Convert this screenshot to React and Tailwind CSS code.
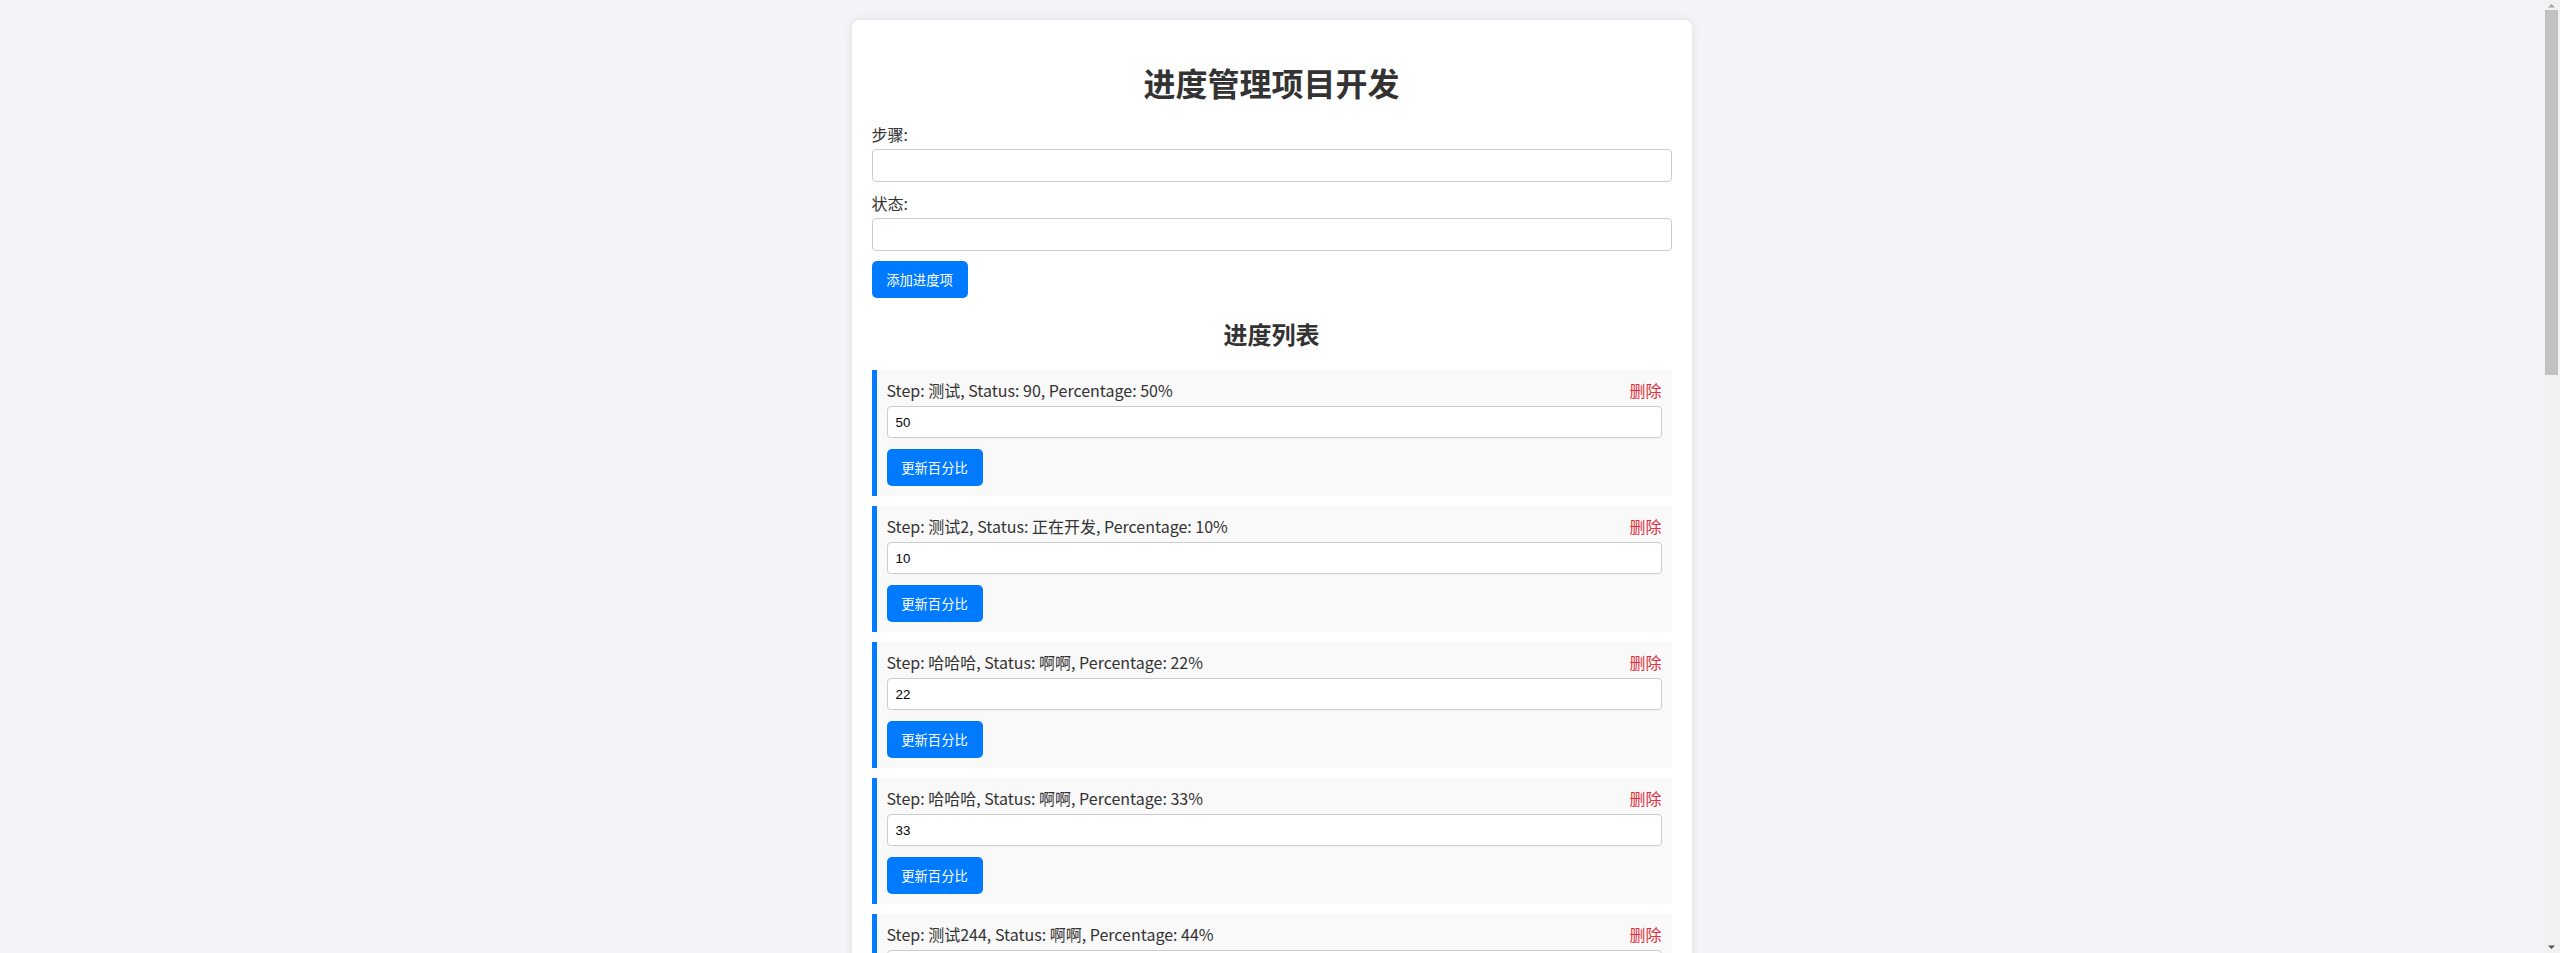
import React, { useState } from 'react';

const initialItems = [
  { step: '测试', status: '90', percentage: 50 },
  { step: '测试2', status: '正在开发', percentage: 10 },
  { step: '哈哈哈', status: '啊啊', percentage: 22 },
  { step: '哈哈哈', status: '啊啊', percentage: 33 },
  { step: '测试244', status: '啊啊', percentage: 44 },
  { step: '测试3', status: '完成', percentage: 60 },
  { step: '设计', status: '进行中', percentage: 70 },
  { step: '编码', status: '进行中', percentage: 35 },
  { step: '联调', status: '未开始', percentage: 0 },
  { step: '验收', status: '未开始', percentage: 5 },
  { step: '部署', status: '未开始', percentage: 0 },
  { step: '文档', status: '啊啊', percentage: 15 },
  { step: '回归', status: '啊啊', percentage: 20 },
  { step: '上线', status: '未开始', percentage: 0 },
  { step: '复盘', status: '未开始', percentage: 0 },
];

function Scrollbar() {
  return (
    <div className="flex w-[17px] shrink-0 flex-col items-center bg-[#f1f1f1]">
      <svg width="9" height="9" viewBox="0 0 9 9" className="mt-[1px]">
        <path d="M1 6.5 L4.5 3 L8 6.5 Z" fill="#a3a3a3" />
      </svg>
      <div className="w-[13px] h-[365px] bg-[#c1c1c1]" />
      <div className="flex-1" />
      <svg width="9" height="9" viewBox="0 0 9 9" className="mb-[1px]">
        <path d="M1 2.5 L8 2.5 L4.5 6 Z" fill="#505050" />
      </svg>
    </div>
  );
}

export default function App() {
  const [items, setItems] = useState(initialItems.map((it) => ({ ...it, draft: String(it.percentage) })));
  const [step, setStep] = useState('');
  const [status, setStatus] = useState('');

  const addItem = () => {
    if (!step) return;
    setItems([...items, { step, status, percentage: 0, draft: '0' }]);
    setStep('');
    setStatus('');
  };

  const updateDraft = (i, value) => {
    const next = [...items];
    next[i] = { ...next[i], draft: value };
    setItems(next);
  };

  const applyPercentage = (i) => {
    const next = [...items];
    next[i] = { ...next[i], percentage: Number(next[i].draft) || 0 };
    setItems(next);
  };

  const removeItem = (i) => setItems(items.filter((_, idx) => idx !== i));

  return (
    <div className="flex h-screen bg-[#f4f4f8] font-['Noto_Sans_CJK_SC','Noto_Sans',sans-serif] text-[#333]">
      <div className="flex-1 overflow-y-auto">
        <div className="mx-auto mt-5 w-[840px] rounded-lg bg-white p-5 shadow-[0_0_10px_rgba(0,0,0,0.1)]">
          {/* Title */}
          <h1 className="my-[21px] text-center text-[32px] font-bold leading-[42px]">进度管理项目开发</h1>

          {/* Add form */}
          <label className="mb-[4px] block text-base leading-[21px]">步骤:</label>
          <input
            value={step}
            onChange={(e) => setStep(e.target.value)}
            className="mb-[11px] block h-[33px] w-full rounded border border-[#ccc] bg-white px-2 font-['Liberation_Sans',sans-serif] text-[13.33px] outline-none"
          />
          <label className="mb-[4px] block text-base leading-[21px]">状态:</label>
          <input
            value={status}
            onChange={(e) => setStatus(e.target.value)}
            className="mb-[10px] block h-[33px] w-full rounded border border-[#ccc] bg-white px-2 font-['Liberation_Sans',sans-serif] text-[13.33px] outline-none"
          />
          <button
            onClick={addItem}
            className="block h-[37px] w-[96px] rounded-[5px] bg-[#007bff] text-[13.33px] text-white"
          >
            添加进度项
          </button>

          {/* List */}
          <h2 className="my-5 text-center text-2xl font-bold leading-[32px]">进度列表</h2>

          <ul className="flex flex-col gap-[10px]">
            {items.map((item, i) => (
              <li key={i} className="border-l-[5px] border-[#007bff] bg-[#f9f9f9] p-[10px]">
                <div className="flex items-start justify-between text-base leading-[21px]">
                  <span>
                    Step: {item.step}, Status: {item.status}, Percentage: {item.percentage}%
                  </span>
                  <button onClick={() => removeItem(i)} className="text-base leading-[21px] text-[#e0303f]">
                    删除
                  </button>
                </div>
                <input
                  value={item.draft}
                  onChange={(e) => updateDraft(i, e.target.value)}
                  className="mt-[5px] block h-[32px] w-full rounded border border-[#ccc] bg-white px-2 font-['Liberation_Sans',sans-serif] text-[13.33px] text-black outline-none"
                />
                <button
                  onClick={() => applyPercentage(i)}
                  className="mt-[11px] block h-[37px] w-[96px] rounded-[5px] bg-[#007bff] text-[13.33px] text-white"
                >
                  更新百分比
                </button>
              </li>
            ))}
          </ul>
        </div>
        <div className="h-5" />
      </div>
      <Scrollbar />
    </div>
  );
}
